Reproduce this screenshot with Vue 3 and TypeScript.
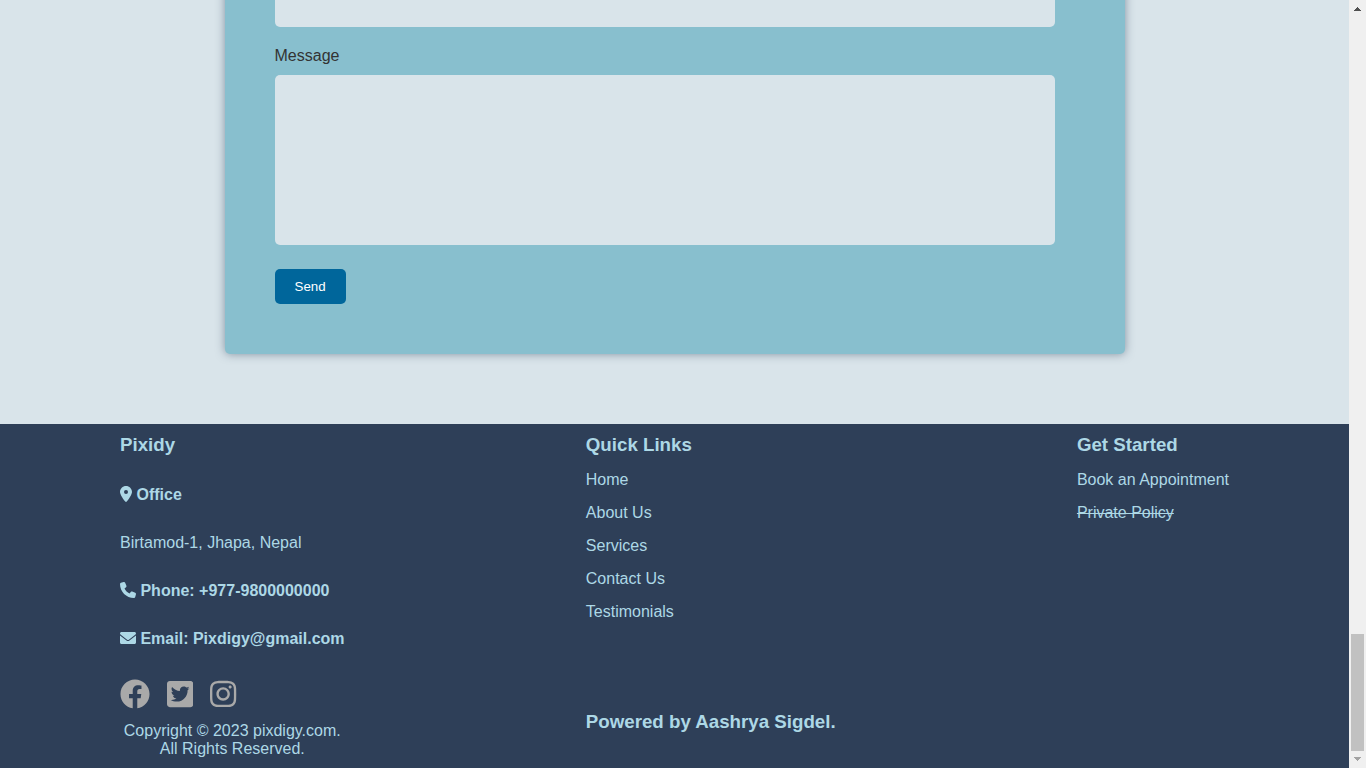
<script setup lang="ts">
interface FooterLink {
  label: string
  struck?: boolean
}

interface Social {
  name: string
  width: number
  path: string
}

const quickLinks: FooterLink[] = [
  { label: 'Home' },
  { label: 'About Us' },
  { label: 'Services' },
  { label: 'Contact Us' },
  { label: 'Testimonials' },
]

const startLinks: FooterLink[] = [
  { label: 'Book an Appointment' },
  { label: 'Private Policy', struck: true },
]

const socials: Social[] = [
  {
    name: 'Facebook',
    width: 512,
    path: 'M504 256C504 119 393 8 256 8S8 119 8 256c0 123.78 90.69 226.38 209.25 245V327.69h-63V256h63v-54.64c0-62.15 37-96.48 93.67-96.48 27.14 0 55.52 4.84 55.52 4.84v61h-31.28c-30.8 0-40.41 19.12-40.41 38.73V256h68.78l-11 71.69h-57.78V501C413.31 482.38 504 379.78 504 256z',
  },
  {
    name: 'Twitter',
    width: 448,
    path: 'M400 32H48C21.5 32 0 53.5 0 80v352c0 26.5 21.5 48 48 48h352c26.5 0 48-21.5 48-48V80c0-26.5-21.5-48-48-48zm-48.9 158.8c.2 2.8.2 5.7.2 8.5 0 86.7-66 186.6-186.6 186.6-37.2 0-71.7-10.8-100.7-29.4 5.3.6 10.4.8 15.8.8 30.7 0 58.9-10.4 81.4-28-28.8-.6-53-19.5-61.3-45.5 10.1 1.5 19.2 1.5 29.6-1.2-30-6.1-52.5-32.5-52.5-64.4v-.8c8.7 4.9 18.9 7.9 29.6 8.3a65.447 65.447 0 0 1-29.2-54.6c0-12.2 3.2-23.4 8.9-33.1 32.3 39.8 80.8 65.8 135.2 68.6-9.3-44.5 24-80.6 64-80.6 18.9 0 35.9 7.9 47.9 20.7 14.8-2.8 29-8.3 41.6-15.8-4.9 15.2-15.2 28-28.8 36.1 13.2-1.4 26-5.1 37.8-10.2-8.9 13.1-20.1 24.7-32.9 34z',
  },
  {
    name: 'Instagram',
    width: 448,
    path: 'M224.1 141c-63.6 0-114.9 51.3-114.9 114.9s51.3 114.9 114.9 114.9S339 319.5 339 255.9 287.7 141 224.1 141zm0 189.6c-41.1 0-74.7-33.5-74.7-74.7s33.5-74.7 74.7-74.7 74.7 33.5 74.7 74.7-33.6 74.7-74.7 74.7zm146.4-194.3c0 14.9-12 26.8-26.8 26.8-14.9 0-26.8-12-26.8-26.8s12-26.8 26.8-26.8 26.8 12 26.8 26.8zm76.1 27.2c-1.7-35.9-9.9-67.7-36.2-93.9-26.2-26.2-58-34.4-93.9-36.2-37-2.1-147.9-2.1-184.9 0-35.8 1.7-67.6 9.9-93.9 36.1s-34.4 58-36.2 93.9c-2.1 37-2.1 147.9 0 184.9 1.7 35.9 9.9 67.7 36.2 93.9s58 34.4 93.9 36.2c37 2.1 147.9 2.1 184.9 0 35.9-1.7 67.7-9.9 93.9-36.2 26.2-26.2 34.4-58 36.2-93.9 2.1-37 2.1-147.8 0-184.8zM398.8 388c-7.8 19.6-22.9 34.7-42.6 42.6-29.5 11.7-99.5 9-132.1 9s-102.7 2.6-132.1-9c-19.6-7.8-34.7-22.9-42.6-42.6-11.7-29.5-9-99.5-9-132.1s-2.6-102.7 9-132.1c7.8-19.6 22.9-34.7 42.6-42.6 29.5-11.7 99.5-9 132.1-9s102.7-2.6 132.1 9c19.6 7.8 34.7 22.9 42.6 42.6 11.7 29.5 9 99.5 9 132.1s2.7 102.7-9 132.1z',
  },
]
</script>

<template>
  <div class="window">
    <div class="page">
      <main class="contact">
        <form class="card" @submit.prevent>
          <input class="field" type="text" aria-label="Subject" />
          <label class="label" for="message">Message</label>
          <textarea id="message" class="field message"></textarea>
          <button class="send" type="submit">Send</button>
        </form>
      </main>

      <footer class="footer">
        <section class="company">
          <h3>Pixidy</h3>
          <h4>
            <svg class="icon pin" viewBox="0 0 384 512" aria-hidden="true">
              <path d="M215.7 499.2C267 435 384 279.4 384 192C384 86 298 0 192 0S0 86 0 192c0 87.4 117 243 168.3 307.2c12.3 15.3 35.1 15.3 47.4 0zM192 128a64 64 0 1 1 0 128 64 64 0 1 1 0-128z" />
            </svg>
            Office
          </h4>
          <p>Birtamod-1, Jhapa, Nepal</p>
          <h4>
            <svg class="icon" viewBox="0 0 512 512" aria-hidden="true">
              <path d="M164.9 24.6c-7.7-18.6-28-28.5-47.4-23.2l-88 24C12.1 30.2 0 46 0 64C0 311.4 200.6 512 448 512c18 0 33.8-12.1 38.6-29.5l24-88c5.3-19.4-4.6-39.7-23.2-47.4l-96-40c-16.3-6.8-35.2-2.1-46.3 11.6L304.7 368C234.3 334.7 177.3 277.7 144 207.3L193.3 167c13.7-11.2 18.4-30 11.6-46.3l-40-96z" />
            </svg>
            Phone: +977-9800000000
          </h4>
          <h4>
            <svg class="icon" viewBox="0 0 512 512" aria-hidden="true">
              <path d="M256 352c-16.53 0-33.06-5.422-47.16-16.41L0 173.2V400C0 426.5 21.49 448 48 448h416c26.51 0 48-21.49 48-48V173.2l-208.8 162.5C289.1 346.6 272.5 352 256 352zM16.29 145.3l212.2 165.1c16.19 12.6 38.87 12.6 55.06 0l212.2-165.1C505.1 137.3 512 125 512 112C512 85.49 490.5 64 464 64h-416C21.49 64 0 85.49 0 112C0 125 6.01 137.3 16.29 145.3z" />
            </svg>
            Email: Pixdigy@gmail.com
          </h4>
          <div class="socials">
            <a v-for="s in socials" :key="s.name" href="#" :aria-label="s.name">
              <svg :viewBox="`0 0 ${s.width} 512`" aria-hidden="true"><path :d="s.path" /></svg>
            </a>
          </div>
          <p class="copyright">Copyright © 2023 pixdigy.com.<br />All Rights Reserved.</p>
        </section>

        <section>
          <h3>Quick Links</h3>
          <ul>
            <li v-for="l in quickLinks" :key="l.label"><a href="#">{{ l.label }}</a></li>
          </ul>
          <h3 class="powered">Powered by Aashrya Sigdel.</h3>
        </section>

        <section>
          <h3>Get Started</h3>
          <ul>
            <li v-for="l in startLinks" :key="l.label">
              <a href="#" :class="{ struck: l.struck }">{{ l.label }}</a>
            </li>
          </ul>
        </section>
      </footer>
    </div>

    <div class="scrollbar" aria-hidden="true">
      <svg class="arrow up" viewBox="0 0 17 17"><path d="M8 7h1v1h1v1h1v1h1v1H5v-1h1V9h1V8h1z" /></svg>
      <div class="track"><div class="thumb"></div></div>
      <svg class="arrow down" viewBox="0 0 17 17"><path d="M5 6h7v1h-1v1h-1v1H9v1H8V9H7V8H6V7H5z" /></svg>
    </div>
  </div>
</template>

<style>
body {
  margin: 0;
}
</style>

<style scoped>
.window {
  display: flex;
  height: 100vh;
  overflow: hidden;
  font-family: "Liberation Sans", Arial, sans-serif;
  font-size: 16px;
  line-height: 18px;
}

.page {
  flex: 1;
  display: flex;
  flex-direction: column;
  background: #d9e4ea;
}

.contact {
  flex: 1;
  min-height: 0;
  display: flex;
  flex-direction: column;
  justify-content: flex-end;
  align-items: center;
  padding-bottom: 70px;
  overflow: hidden;
  box-sizing: border-box;
}

.card {
  flex: none;
  display: flex;
  flex-direction: column;
  align-items: flex-start;
  width: 100%;
  max-width: 900px;
  box-sizing: border-box;
  padding: 50px 70px 50px 50px;
  border-radius: 5px;
  background: #88bfce;
  box-shadow: 0 0 10px rgba(45, 63, 88, 0.5);
}

.field {
  display: block;
  width: 100%;
  height: 40px;
  box-sizing: border-box;
  padding: 10px;
  border: 0;
  border-radius: 5px;
  outline: 0;
  background: #d9e4ea;
  font: inherit;
  resize: none;
}

.label {
  margin: 20px 0 10px;
  color: #333;
}

.message {
  height: 170px;
}

.send {
  height: 35px;
  margin-top: 24px;
  padding: 0 20px;
  border: 0;
  border-radius: 5px;
  background: #00669b;
  color: #fff;
  font-family: inherit;
}

.footer {
  display: flex;
  justify-content: space-between;
  padding: 10px 120px;
  background: #2e3f58;
  color: #add8e6;
}

h3,
h4,
p,
ul {
  margin: 0;
  padding: 0;
}

h3 {
  margin-bottom: 1px;
  line-height: 21px;
}

ul {
  display: flow-root;
  list-style: none;
}

li {
  margin-top: 15px;
}

a {
  color: inherit;
  text-decoration: none;
}

.struck {
  text-decoration: line-through;
}

.powered {
  margin-top: 90px;
}

.company h4,
.company p {
  padding-top: 30px;
}

.icon {
  width: 16px;
  height: 16px;
  vertical-align: -2px;
  fill: currentColor;
}

.pin {
  width: 12px;
}

.socials {
  display: flex;
  gap: 17px;
  padding-top: 31px;
  color: #a9a9a9;
}

.socials svg {
  display: block;
  height: 30px;
  fill: currentColor;
}

.company .copyright {
  padding-top: 13px;
  text-align: center;
}

.scrollbar {
  display: flex;
  flex-direction: column;
  width: 17px;
  background: #f0f0f0;
}

.arrow {
  width: 17px;
  height: 17px;
}

.up {
  fill: #505050;
}

.down {
  fill: #a3a3a3;
}

.track {
  flex: 1;
  display: flex;
  flex-direction: column;
  justify-content: flex-end;
  padding: 0 2px;
}

.thumb {
  height: 16%;
  background: #c1c1c1;
}
</style>
